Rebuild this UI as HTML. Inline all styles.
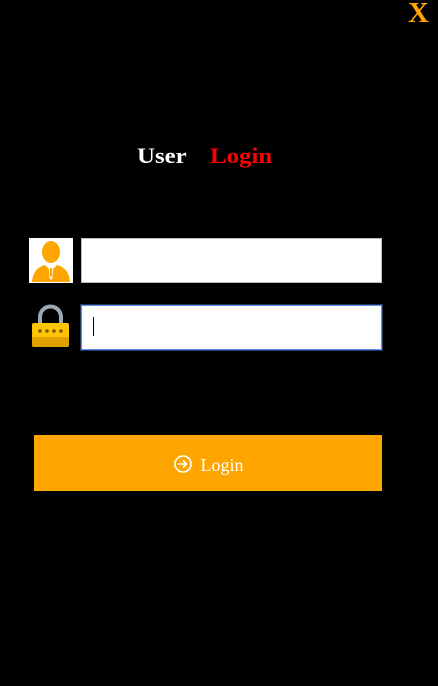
<!DOCTYPE html>
<html><head><meta charset="utf-8"><style>
html,body{margin:0;padding:0;background:#000;width:438px;height:686px;overflow:hidden;position:relative;font-family:"Liberation Serif",serif}
.x{position:absolute;left:408px;top:-3px;color:#FFA500;font-weight:bold;font-size:29px}
.t{position:absolute;top:143px;font-size:22px;font-weight:bold;white-space:nowrap;transform-origin:0 0;transform:scaleX(1.13)}
.box{position:absolute;background:#fff;box-sizing:border-box}
.btn{position:absolute;left:34px;top:435px;width:348px;height:56px;background:#FFA500;color:#fff;font-size:18px;display:flex;align-items:center;justify-content:center;padding-top:5px;box-sizing:border-box}
</style></head><body>
<div class="x">X</div>
<div class="t" style="left:137px;color:#fff">User</div>
<div class="t" style="left:210px;color:#f00">Login</div>
<div class="box" style="left:29px;top:238px;width:44px;height:45px;">
<svg width="44" height="45" viewBox="0 0 44 45"><ellipse cx="22" cy="14" rx="9" ry="11" fill="#FFA500"/><path d="M3 44 Q4 30 16 27 L22 33 L28 27 Q40 30 41 44 Z" fill="#FFA500"/><path d="M20 30 L24 30 L23.5 40 L22 42 L20.5 40Z" fill="#fff"/><path d="M21 30 L23 30 L23 38 L22 39 L21 38Z" fill="#FFA500"/></svg></div>
<div class="box" style="left:81px;top:238px;width:301px;height:45px;border:1px solid #bbb"></div>
<svg style="position:absolute;left:31px;top:304px" width="39" height="44" viewBox="0 0 39 44"><path d="M9 20 V13 A10.5 10.5 0 0 1 30 13 V20" fill="none" stroke="#9aa8b4" stroke-width="4"/><rect x="1" y="19" width="37" height="24" rx="2" fill="#FFC400"/><rect x="1" y="33" width="37" height="10" rx="2" fill="#E0A000"/><g fill="#7a5a10"><circle cx="9" cy="27" r="1.8"/><circle cx="16" cy="27" r="1.8"/><circle cx="23" cy="27" r="1.8"/><circle cx="30" cy="27" r="1.8"/></g></svg>
<div class="box" style="left:81px;top:305px;width:301px;height:45px;border:1px solid #5b8def;box-shadow:0 0 0 1px rgba(91,141,239,0.4)"></div>
<div style="position:absolute;left:93px;top:317px;width:1px;height:19px;background:#000"></div>
<div class="btn"><svg width="20" height="20" viewBox="0 0 20 20" style="margin-right:8px;margin-top:-3px"><circle cx="10" cy="10" r="8" fill="none" stroke="#fff" stroke-width="1.6"/><path d="M5 10 H13 M10 6.5 L13.5 10 L10 13.5" fill="none" stroke="#fff" stroke-width="1.6"/></svg>Login</div>
</body></html>
